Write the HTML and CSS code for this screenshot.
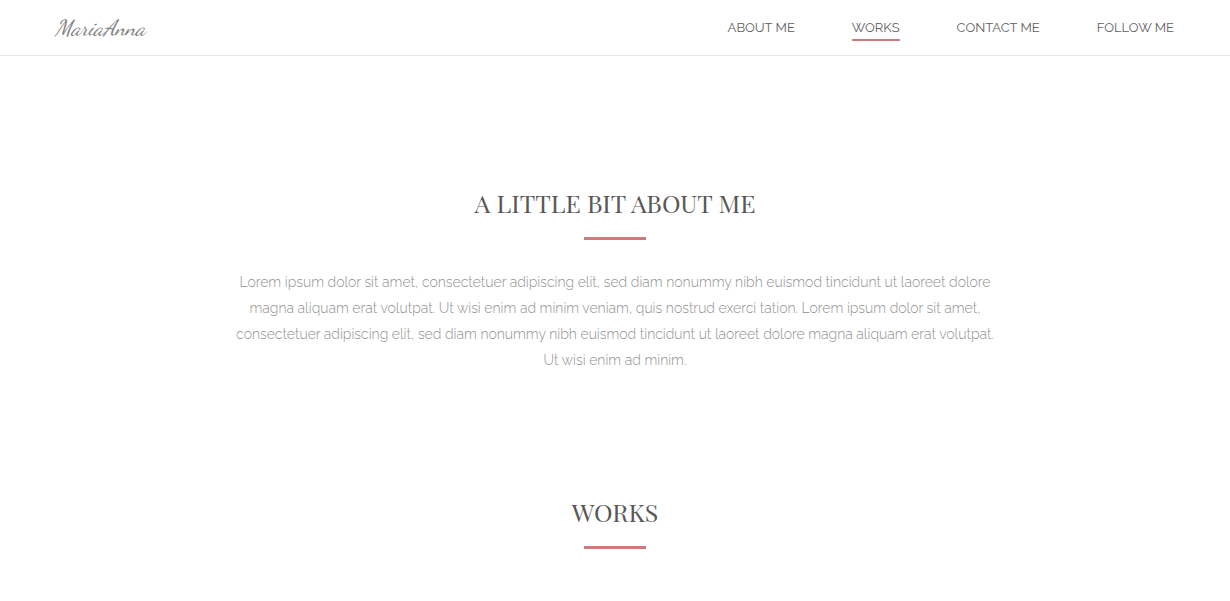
FILE: index.html
```html
<!DOCTYPE html>
<html lang="en">
<head>
<meta charset="utf-8">
<title>MariaAnna</title>
<meta name="viewport" content="width=device-width, initial-scale=1">
<link rel="stylesheet" href="styles.css">
</head>
<body>
<header class="site-header">
  <a class="logo" href="#">MariaAnna</a>
  <nav class="nav">
    <a class="nav-link" href="#about">ABOUT ME</a>
    <a class="nav-link nav-link-active" href="#works" aria-current="page">WORKS</a>
    <a class="nav-link" href="#contact">CONTACT ME</a>
    <a class="nav-link" href="#follow">FOLLOW ME</a>
  </nav>
</header>
<main>
  <section class="section" id="about">
    <h2 class="section-title">A LITTLE BIT ABOUT ME</h2>
    <p class="section-text">Lorem ipsum dolor sit amet, consectetuer adipiscing elit, sed diam nonummy nibh euismod tincidunt ut laoreet dolore magna aliquam erat volutpat. Ut wisi enim ad minim veniam, quis nostrud exerci tation. Lorem ipsum dolor sit amet, consectetuer adipiscing elit, sed diam nonummy nibh euismod tincidunt ut laoreet dolore magna aliquam erat volutpat. Ut wisi enim ad minim.</p>
  </section>
  <section class="section" id="works">
    <h2 class="section-title">WORKS</h2>
  </section>
</main>
</body>
</html>
```
FILE: styles.css
```css
* { box-sizing: border-box; }
body {
  margin: 0;
  background: #fff;
  color: #585858;
  font-family: Raleway, Lato, sans-serif;
}
.site-header {
  display: flex;
  align-items: center;
  justify-content: space-between;
  min-height: 56px;
  padding: 0 56px 0 55px;
  border-bottom: 1px solid #e7e7e7;
}
.logo {
  color: #808080;
  font: italic 22px "Dancing Script", "Liberation Serif", serif;
  text-decoration: none;
}
.nav { display: flex; flex-wrap: wrap; gap: 0 57px; }
.nav-link {
  padding-top: 4px;
  padding-bottom: 2px;
  border-bottom: 2px solid transparent;
  color: #606060;
  font-size: 13px;
  line-height: 19px;
  text-decoration: none;
}
.nav-link-active { border-bottom-color: #cf7a7a; }
.section {
  padding: 130px 16px 0;
  text-align: center;
}
.section + .section { padding-top: 122px; }
.section-title {
  margin: 0;
  color: #585858;
  font: 400 25px/34px "Playfair Display", "Liberation Serif", serif;
}
.section-title::after {
  content: "";
  display: block;
  width: 62px;
  height: 3px;
  margin: 17px auto 0;
  background: #cf7a7a;
}
.section-text {
  max-width: 770px;
  margin: 29px auto 0;
  color: #909090;
  font-size: 14px;
  font-weight: 300;
  line-height: 26px;
}
```
